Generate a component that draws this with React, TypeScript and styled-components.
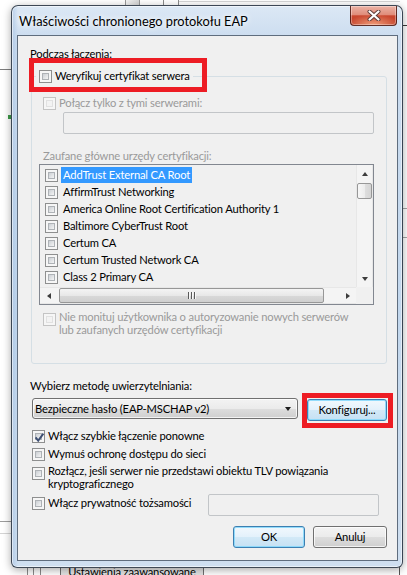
import React from 'react';
import styled, { createGlobalStyle } from 'styled-components';

const UI_FONT = "Lato, 'Open Sans', 'Liberation Sans', sans-serif";

const GlobalStyle = createGlobalStyle`
  html, body {
    margin: 0;
    padding: 0;
  }
  body {
    width: 407px;
    height: 575px;
    overflow: hidden;
    background: #ffffff;
    font-family: ${UI_FONT};
    font-size: 11.2px;
    letter-spacing: -0.17px;
    color: #000;
  }
  * {
    box-sizing: border-box;
  }
`;

// ---------- desktop behind the dialog ----------

const Desktop = styled.div`
  position: relative;
  width: 407px;
  height: 575px;
  overflow: hidden;
  background: #ffffff;
`;

const BackRule = styled.div<{ $x: number; $y: number; $w: number; $color: string }>`
  position: absolute;
  left: ${p => p.$x}px;
  top: ${p => p.$y}px;
  width: ${p => p.$w}px;
  height: 1px;
  background: ${p => p.$color};
`;

const BackPost = styled.div<{ $x: number; $y: number; $h: number; $color: string }>`
  position: absolute;
  left: ${p => p.$x}px;
  top: ${p => p.$y}px;
  width: 1px;
  height: ${p => p.$h}px;
  background: ${p => p.$color};
`;

const BackGrip = styled.div`
  position: absolute;
  left: 125px;
  top: 0;
  width: 15px;
  height: 8px;
  border-left: 1px solid #9a9a9a;
  border-right: 1px solid #9a9a9a;
  background: linear-gradient(90deg, #f4f4f4, #d6d6d6);
`;

const BackCell = styled.div`
  position: absolute;
  left: 163px;
  top: -2px;
  width: 16px;
  height: 9px;
  border: 1px solid #8c8c8c;
  background: #ffffff;
`;

const BackMark = styled.div`
  position: absolute;
  left: 8px;
  top: 115px;
  width: 4px;
  height: 4px;
  background: #3f9b4a;
`;

const BackButton = styled.div`
  position: absolute;
  left: 60px;
  top: 560px;
  width: 144px;
  height: 23px;
  border: 1px solid #707070;
  border-radius: 2px;
  background: linear-gradient(180deg, #f2f2f2, #dcdcdc);
  display: flex;
  align-items: center;
  justify-content: center;
`;

// ---------- dialog window ----------

const Window = styled.div`
  position: absolute;
  z-index: 1;
  left: 11px;
  top: 5px;
  width: 392px;
  height: 563px;
  border: 1px solid rgba(28, 38, 50, 0.82);
  border-radius: 7px 7px 6px 6px;
  background:
    linear-gradient(90deg, rgba(160, 190, 225, 0.55) 0px, rgba(160, 190, 225, 0) 6px),
    linear-gradient(180deg, #dce8f5 0%, #cbdcef 6%, #c2d7ed 55%, #cfdff0 100%);
  box-shadow: inset 0 0 0 1px rgba(255, 255, 255, 0.55), 0 2px 9px rgba(0, 0, 0, 0.35);
  display: flex;
  flex-direction: column;
`;

const TitleBar = styled.div`
  height: 29px;
  flex: none;
  display: flex;
  align-items: flex-start;
  padding: 0 5px 0 7px;
`;

const TitleText = styled.div`
  margin-top: 7px;
  line-height: 16px;
  font-size: 12.8px;
  letter-spacing: 0;
  color: #000;
  text-shadow: 0 0 5px #ffffff, 0 0 9px rgba(255, 255, 255, 0.9);
`;

const CloseButton = styled.div`
  margin-left: auto;
  width: 47px;
  height: 20px;
  border: 1px solid rgba(72, 24, 18, 0.85);
  border-top: none;
  border-radius: 0 0 4px 4px;
  background:
    radial-gradient(ellipse 60% 55% at 50% 100%, rgba(255, 190, 150, 0.75), rgba(255, 190, 150, 0)),
    linear-gradient(180deg, #ebb3a6 0%, #e08d7b 45%, #c9472f 52%, #c23f28 100%);
  box-shadow: inset 0 0 0 1px rgba(255, 255, 255, 0.35);
  display: flex;
  align-items: center;
  justify-content: center;
`;

const Client = styled.div`
  position: relative;
  flex: 1;
  margin: 0 4px 6px 5px;
  border: 1px solid #5f6d7e;
  background: #f0f0f0;
  display: flex;
  flex-direction: column;
  align-items: flex-start;
`;

const Highlight = styled.div<{ $x: number; $y: number; $w: number; $h: number }>`
  position: absolute;
  left: ${p => p.$x}px;
  top: ${p => p.$y}px;
  width: ${p => p.$w}px;
  height: ${p => p.$h}px;
  border: 5px solid #ed1c24;
  pointer-events: none;
`;

// ---------- text and controls ----------

const Caption = styled.div<{ $top: number; $left: number; $disabled?: boolean }>`
  margin: ${p => p.$top}px 0 0 ${p => p.$left}px;
  line-height: 15px;
  color: ${p => (p.$disabled ? '#9a9a9a' : '#000')};
  white-space: nowrap;
`;

const Group = styled.fieldset`
  margin: 7px 0 0 13px;
  width: 356px;
  min-width: 0;
  padding: 0 0 27px 0;
  border: 1px solid #d5dfe5;
  border-radius: 3px;
  display: flex;
  flex-direction: column;
  align-items: flex-start;
`;

const GroupLegend = styled.legend`
  margin-left: 4px;
  padding: 0 3px;
  height: 16px;
  line-height: 16px;
  display: flex;
  align-items: center;
  gap: 3px;
  white-space: nowrap;
`;

const CheckRow = styled.div<{ $top: number; $left: number; $lh: number; $disabled?: boolean }>`
  margin: ${p => p.$top}px 0 0 ${p => p.$left}px;
  display: flex;
  align-items: flex-start;
  gap: 3px;
  line-height: ${p => p.$lh}px;
  color: ${p => (p.$disabled ? '#9a9a9a' : '#000')};
`;

const CheckText = styled.span`
  white-space: pre;
`;

const Box = styled.span<{ $disabled?: boolean; $offset: number }>`
  position: relative;
  flex: none;
  width: 13px;
  height: 13px;
  margin-top: ${p => p.$offset}px;
  padding: 2px;
  display: flex;
  border: 1px solid ${p => (p.$disabled ? '#c4c4c4' : '#8e8f8f')};
  background: #f6f6f6;
`;

const BoxFill = styled.span<{ $disabled?: boolean }>`
  flex: 1;
  border: 1px solid ${p => (p.$disabled ? '#e1e1e1' : '#aeb2b6')};
  background: ${p =>
    p.$disabled
      ? '#f3f3f3'
      : 'linear-gradient(135deg, #cbcfd4 0%, #e2e4e6 55%, #f4f4f4 100%)'};
`;

const Tick = styled.svg`
  position: absolute;
  left: 1px;
  top: 1px;
`;

const Checkbox = ({
  checked,
  disabled,
  offset = 1.5,
}: {
  checked?: boolean;
  disabled?: boolean;
  offset?: number;
}) => (
  <Box $disabled={disabled} $offset={offset}>
    <BoxFill $disabled={disabled} />
    {checked && (
      <Tick width="11" height="11" viewBox="0 0 11 11">
        <path d="M1.6 5.4 L4.2 8.6 L9.4 1.6" fill="none" stroke="#3e4f72" strokeWidth="1.9" />
      </Tick>
    )}
  </Box>
);

const TextField = styled.div<{ $top: number; $left: number; $w: number }>`
  margin: ${p => p.$top}px 0 0 ${p => p.$left}px;
  width: ${p => p.$w}px;
  height: 22px;
  flex: none;
  border: 1px solid #c2c5c8;
  border-radius: 2px;
  background: #f0f0f0;
`;

// ---------- certificate list ----------

const ListBox = styled.div`
  margin: 1px 0 0 7px;
  width: 335px;
  height: 141px;
  border: 1px solid #828790;
  background: #f0f0f0;
  display: grid;
  grid-template-columns: 1fr 17px;
  grid-template-rows: 1fr 17px;
`;

const ListItems = styled.div`
  padding-top: 2px;
  overflow: hidden;
`;

const ListRow = styled.div`
  height: 17px;
  display: flex;
  align-items: flex-start;
  padding-left: 5px;
`;

const ListLabel = styled.span<{ $selected?: boolean }>`
  margin-left: 3px;
  height: 16px;
  line-height: 16px;
  padding: 0 2px;
  white-space: nowrap;
  background: ${p => (p.$selected ? '#3399ff' : 'transparent')};
  color: ${p => (p.$selected ? '#ffffff' : '#000')};
`;

const VScroll = styled.div`
  display: flex;
  flex-direction: column;
  background: #f4f4f4;
  box-shadow: inset 1px 0 #e7e7e7, inset -1px 0 #e7e7e7;
`;

const HScroll = styled.div`
  display: flex;
  align-items: center;
  background: #f4f4f4;
  box-shadow: inset 0 1px #e7e7e7, inset 0 -1px #e7e7e7;
`;

const ScrollCorner = styled.div`
  background: #f0f0f0;
`;

const ArrowCell = styled.div`
  flex: none;
  width: 17px;
  height: 17px;
  display: flex;
  align-items: center;
  justify-content: center;
`;

const Arrow = styled.span<{ $dir: 'up' | 'down' | 'left' | 'right' }>`
  width: 0;
  height: 0;
  border-style: solid;
  border-color: transparent;
  ${p =>
    p.$dir === 'up'
      ? 'border-width: 0 3.5px 4px 3.5px; border-bottom-color: #3d3d3d;'
      : p.$dir === 'down'
      ? 'border-width: 4px 3.5px 0 3.5px; border-top-color: #3d3d3d;'
      : p.$dir === 'left'
      ? 'border-width: 3.5px 4px 3.5px 0; border-right-color: #3d3d3d;'
      : 'border-width: 3.5px 0 3.5px 4px; border-left-color: #3d3d3d;'}
`;

const VThumb = styled.div`
  flex: none;
  margin: 1px 1px 0 1px;
  height: 16px;
  border: 1px solid #979797;
  border-radius: 2px;
  background: linear-gradient(90deg, #f7f7f7 0%, #ececec 50%, #dedede 51%, #d4d4d4 100%);
`;

const HThumb = styled.div`
  flex: none;
  margin-left: 2px;
  width: 265px;
  height: 15px;
  border: 1px solid #979797;
  border-radius: 2px;
  background: linear-gradient(180deg, #f4f4f4 0%, #e8e8e8 50%, #d9d9d9 51%, #cfcfcf 100%);
  display: flex;
  align-items: center;
  justify-content: center;
  gap: 1px;
`;

const GripLine = styled.span`
  width: 2px;
  height: 7px;
  border-left: 1px solid #5a5a5a;
  border-right: 1px solid #f8f8f8;
`;

const Spacer = styled.div`
  flex: 1;
`;

// ---------- method row and buttons ----------

const MethodRow = styled.div`
  margin: 5px 0 0 14px;
  display: flex;
  align-items: flex-start;
  gap: 9px;
`;

const MethodSelect = styled.div`
  width: 266px;
  height: 21px;
  border: 1px solid #707070;
  border-radius: 3px;
  background: linear-gradient(180deg, #f3f3f3 0%, #ebebeb 50%, #dddddd 51%, #cfcfcf 100%);
  box-shadow: inset 0 0 0 1px rgba(255, 255, 255, 0.75);
  display: flex;
  align-items: center;
  padding: 0 6px 0 2px;
  white-space: nowrap;
`;

const SelectValue = styled.span`
  flex: 1;
  line-height: 17px;
`;

const DropArrow = styled.span`
  width: 0;
  height: 0;
  border-style: solid;
  border-color: #1e1e1e transparent transparent transparent;
  border-width: 4px 3.5px 0 3.5px;
`;

const PushButton = styled.button<{ $w: number; $accent?: boolean; $top?: number }>`
  flex: none;
  margin: ${p => p.$top ?? 0}px 0 0 0;
  width: ${p => p.$w}px;
  height: 22px;
  padding: 0;
  border: 1px solid ${p => (p.$accent ? '#3c7fb1' : '#707070')};
  border-radius: 3px;
  background: ${p =>
    p.$accent
      ? 'linear-gradient(180deg, #f1f8fd 0%, #e3f1fb 50%, #d2e9f7 51%, #c6e1f3 100%)'
      : 'linear-gradient(180deg, #f3f3f3 0%, #ebebeb 50%, #dddddd 51%, #cfcfcf 100%)'};
  box-shadow: inset 0 0 0 1px ${p => (p.$accent ? 'rgba(130, 215, 250, 0.85)' : 'rgba(255, 255, 255, 0.75)')};
  font-family: ${UI_FONT};
  font-size: 11.2px;
  letter-spacing: -0.17px;
  color: #000;
  line-height: 18px;
`;

const PrivacyRow = styled.div`
  margin: 4px 0 0 14px;
  display: flex;
  align-items: flex-start;
`;

const PrivacyLabel = styled.div`
  width: 176px;
  margin-top: 1px;
  display: flex;
  align-items: flex-start;
  gap: 3px;
  line-height: 16px;
  white-space: nowrap;
`;

const ButtonBar = styled.div`
  align-self: stretch;
  margin-top: 10px;
  padding-right: 10px;
  display: flex;
  justify-content: flex-end;
  gap: 8px;
`;

const certificates = [
  'AddTrust External CA Root',
  'AffirmTrust Networking',
  'America Online Root Certification Authority 1',
  'Baltimore CyberTrust Root',
  'Certum CA',
  'Certum Trusted Network CA',
  'Class 2 Primary CA',
];

const CloseGlyph = () => (
  <svg width="14" height="11" viewBox="0 0 14 11">
    <path d="M2.5 1.5 L11.5 9.5 M11.5 1.5 L2.5 9.5" stroke="#5b3a36" strokeWidth="4" strokeLinecap="round" />
    <path d="M2.5 1.5 L11.5 9.5 M11.5 1.5 L2.5 9.5" stroke="#ffffff" strokeWidth="2.2" strokeLinecap="round" />
  </svg>
);

const App = () => {
  return (
    <Desktop>
      <GlobalStyle />

      {/* what shows of the window behind the dialog */}
      <BackGrip />
      <BackCell />
      <BackRule $x={179} $y={1} $w={221} $color="#d6d6d6" />
      <BackRule $x={0} $y={69} $w={12} $color="#7c7c7c" />
      <BackMark />
      <BackRule $x={0} $y={521} $w={12} $color="#9c9c9c" />
      <BackRule $x={0} $y={533} $w={12} $color="#d4d4d4" />
      <BackRule $x={402} $y={25} $w={5} $color="#3a3a3a" />
      <BackRule $x={402} $y={208} $w={5} $color="#a4a4a4" />
      <BackRule $x={402} $y={237} $w={5} $color="#a4a4a4" />
      <BackPost $x={27} $y={560} $h={15} $color="#8a8a8a" />
      <BackPost $x={33} $y={560} $h={15} $color="#8a8a8a" />
      <BackPost $x={40} $y={560} $h={15} $color="#8a8a8a" />
      <BackPost $x={399} $y={560} $h={15} $color="#555555" />
      <BackButton>Ustawienia zaawansowane</BackButton>

      <Window>
        <TitleBar>
          <TitleText>Właściwości chronionego protokołu EAP</TitleText>
          <CloseButton>
            <CloseGlyph />
          </CloseButton>
        </TitleBar>

        <Client>
          <Caption $top={10} $left={12}>
            Podczas łączenia:
          </Caption>

          <Group>
            <GroupLegend>
              <Checkbox offset={0} />
              <span>Weryfikuj certyfikat serwera</span>
            </GroupLegend>

            <CheckRow $top={11} $left={11} $lh={16} $disabled>
              <Checkbox disabled />
              <CheckText>Połącz tylko z tymi serwerami:</CheckText>
            </CheckRow>
            <TextField $top={1} $left={31} $w={311} />

            <Caption $top={14} $left={11} $disabled>
              Zaufane główne urzędy certyfikacji:
            </Caption>
            <ListBox>
              <ListItems>
                {certificates.map((name, i) => (
                  <ListRow key={name}>
                    <Checkbox offset={2} />
                    <ListLabel $selected={i === 0}>{name}</ListLabel>
                  </ListRow>
                ))}
              </ListItems>
              <VScroll>
                <ArrowCell>
                  <Arrow $dir="up" />
                </ArrowCell>
                <VThumb />
                <Spacer />
                <ArrowCell>
                  <Arrow $dir="down" />
                </ArrowCell>
              </VScroll>
              <HScroll>
                <ArrowCell>
                  <Arrow $dir="left" />
                </ArrowCell>
                <HThumb>
                  <GripLine />
                  <GripLine />
                  <GripLine />
                </HThumb>
                <Spacer />
                <ArrowCell>
                  <Arrow $dir="right" />
                </ArrowCell>
              </HScroll>
              <ScrollCorner />
            </ListBox>

            <CheckRow $top={5} $left={11} $lh={13} $disabled>
              <Checkbox disabled offset={3} />
              <CheckText>
                {'Nie monituj użytkownika o autoryzowanie nowych serwerów\nlub zaufanych urzędów certyfikacji'}
              </CheckText>
            </CheckRow>
          </Group>

          <Caption $top={14} $left={12}>
            Wybierz metodę uwierzytelniania:
          </Caption>
          <MethodRow>
            <MethodSelect>
              <SelectValue>Bezpieczne hasło (EAP-MSCHAP v2)</SelectValue>
              <DropArrow />
            </MethodSelect>
            <PushButton $w={80} $accent $top={1}>
              Konfiguruj...
            </PushButton>
          </MethodRow>

          <CheckRow $top={7} $left={14} $lh={16}>
            <Checkbox checked />
            <CheckText>Włącz szybkie łączenie ponowne</CheckText>
          </CheckRow>
          <CheckRow $top={2} $left={14} $lh={16}>
            <Checkbox />
            <CheckText>Wymuś ochronę dostępu do sieci</CheckText>
          </CheckRow>
          <CheckRow $top={2} $left={14} $lh={13}>
            <Checkbox offset={3} />
            <CheckText>
              {'Rozłącz, jeśli serwer nie przedstawi obiektu TLV powiązania\nkryptograficznego'}
            </CheckText>
          </CheckRow>

          <PrivacyRow>
            <PrivacyLabel>
              <Checkbox />
              <span>Włącz prywatność tożsamości</span>
            </PrivacyLabel>
            <TextField $top={0} $left={0} $w={171} />
          </PrivacyRow>

          <ButtonBar>
            <PushButton $w={72} $accent>
              OK
            </PushButton>
            <PushButton $w={74}>Anuluj</PushButton>
          </ButtonBar>

          <Highlight $x={11} $y={22} $w={178} $h={34} />
          <Highlight $x={284} $y={357} $w={91} $h={35} />
        </Client>
      </Window>
    </Desktop>
  );
};

export default App;
